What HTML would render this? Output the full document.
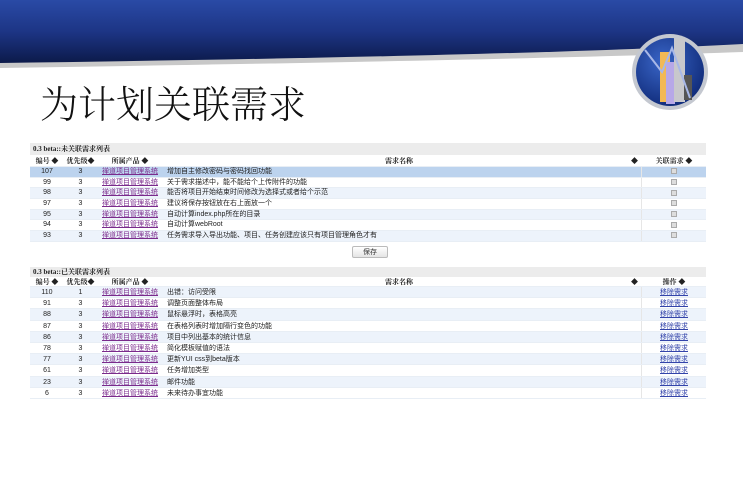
<!DOCTYPE html>
<html><head><meta charset="utf-8"><style>
*{margin:0;padding:0;box-sizing:border-box}
body{width:743px;height:483px;overflow:hidden;background:#fff;position:relative;font-family:"Liberation Sans","Noto Sans CJK SC",sans-serif}
.title{position:absolute;left:40px;top:74px;font-family:"Liberation Serif","Noto Serif CJK SC",serif;font-size:38px;color:#111;font-weight:300}
.tbl{position:absolute;left:30px;width:676px;font-size:7px;color:#222}
.cap{height:12px;background:#ececec;font-family:"Liberation Serif","Noto Serif CJK SC",serif;font-weight:bold;font-size:7px;line-height:12px;padding-left:3px}
.row{display:flex;height:10.7px;line-height:10.7px;border-bottom:1px solid #e8eef5}
.row.h{font-weight:bold;font-family:"Liberation Serif","Noto Serif CJK SC",serif;background:#fff;height:12px;line-height:12px}
.row div{white-space:nowrap;overflow:hidden}
.c1{width:34px;text-align:center}.c2{width:33px;text-align:center}.c3{width:66px;text-align:center}
.c4{flex:1;padding-left:4px;border-right:1px solid #e6e6e6}.c5{width:64px;text-align:center}
.odd{background:#edf3fb}.ev{background:#fff}.sel{background:#bcd3ee}
a{color:#7a2a8c;text-decoration:underline}
.op a{color:#3344aa}
.cb{display:inline-block;width:6px;height:6px;border:1px solid #aaa;background:#ddd;vertical-align:middle}
.btn{position:absolute;left:352px;top:246px;width:36px;height:12px;border:1px solid #bbb;border-radius:2px;background:linear-gradient(#fff,#e4e4e4);font-size:7px;text-align:center;line-height:11px;color:#333}
#t2 .row{height:11.2px;line-height:11.2px}
#t2 .row.h{height:10px;line-height:10px}
#t2 .cap{height:10px;line-height:10px}
</style></head><body>
<svg width="743" height="130" style="position:absolute;left:0;top:0">
<defs><linearGradient id="bg" x1="0" y1="0" x2="0" y2="1"><stop offset="0" stop-color="#2a4aa6"/><stop offset="0.5" stop-color="#1d3585"/><stop offset="1" stop-color="#0c1a4a"/></linearGradient>
<radialGradient id="cg" cx="0.4" cy="0.35" r="0.7"><stop offset="0" stop-color="#3a66c8"/><stop offset="1" stop-color="#0f2a78"/></radialGradient></defs>
<path d="M0 0H743V52Q520 60 0 68Z" fill="#c8c8c8"/>
<path d="M0 0H743V44Q520 56 0 63Z" fill="url(#bg)"/>
<circle cx="670" cy="72" r="38" fill="#c4c8d0"/>
<circle cx="670" cy="72" r="34" fill="url(#cg)"/>
<rect x="660" y="52" width="10" height="50" fill="#f2b955"/>
<rect x="666" y="62" width="9" height="42" fill="#b7a8e8"/>
<rect x="674" y="38" width="11" height="64" fill="#c8c8cc"/>
<rect x="684" y="75" width="8" height="25" fill="#555"/>
<path d="M645 50L662 72L672 48L690 98" stroke="#a8b8e8" stroke-width="2" fill="none"/>
</svg>
<div class="title">为计划关联需求</div>

<div class="tbl" style="top:143px">
<div class="cap">0.3 beta::未关联需求列表</div>
<div class="row h"><div class="c1">编号 ◆</div><div class="c2">优先级◆</div><div class="c3">所属产品 ◆</div><div class="c4" style="text-align:center;border:0">需求名称<span style="float:right;margin-right:4px">◆</span></div><div class="c5">关联需求 ◆</div></div>
<div class="row sel"><div class="c1">107</div><div class="c2">3</div><div class="c3"><a>禅道项目管理系统</a></div><div class="c4">增加自主修改密码与密码找回功能</div><div class="c5"><span class="cb"></span></div></div>
<div class="row ev"><div class="c1">99</div><div class="c2">3</div><div class="c3"><a>禅道项目管理系统</a></div><div class="c4">关于需求描述中，能不能给个上传附件的功能</div><div class="c5"><span class="cb"></span></div></div>
<div class="row odd"><div class="c1">98</div><div class="c2">3</div><div class="c3"><a>禅道项目管理系统</a></div><div class="c4">能否将项目开始结束时间修改为选择式或者给个示范</div><div class="c5"><span class="cb"></span></div></div>
<div class="row ev"><div class="c1">97</div><div class="c2">3</div><div class="c3"><a>禅道项目管理系统</a></div><div class="c4">建议将保存按钮放在右上面放一个</div><div class="c5"><span class="cb"></span></div></div>
<div class="row odd"><div class="c1">95</div><div class="c2">3</div><div class="c3"><a>禅道项目管理系统</a></div><div class="c4">自动计算index.php所在的目录</div><div class="c5"><span class="cb"></span></div></div>
<div class="row ev"><div class="c1">94</div><div class="c2">3</div><div class="c3"><a>禅道项目管理系统</a></div><div class="c4">自动计算webRoot</div><div class="c5"><span class="cb"></span></div></div>
<div class="row odd"><div class="c1">93</div><div class="c2">3</div><div class="c3"><a>禅道项目管理系统</a></div><div class="c4">任务需求导入导出功能、项目、任务创建应该只有项目管理角色才有</div><div class="c5"><span class="cb"></span></div></div>
</div>
<div class="btn">保存</div>

<div class="tbl" id="t2" style="top:267px">
<div class="cap">0.3 beta::已关联需求列表</div>
<div class="row h"><div class="c1">编号 ◆</div><div class="c2">优先级◆</div><div class="c3">所属产品 ◆</div><div class="c4" style="text-align:center;border:0">需求名称<span style="float:right;margin-right:4px">◆</span></div><div class="c5">操作 ◆</div></div>
<div class="row odd"><div class="c1">110</div><div class="c2">1</div><div class="c3"><a>禅道项目管理系统</a></div><div class="c4">出错：访问受限</div><div class="c5 op"><a>移除需求</a></div></div>
<div class="row ev"><div class="c1">91</div><div class="c2">3</div><div class="c3"><a>禅道项目管理系统</a></div><div class="c4">调整页面整体布局</div><div class="c5 op"><a>移除需求</a></div></div>
<div class="row odd"><div class="c1">88</div><div class="c2">3</div><div class="c3"><a>禅道项目管理系统</a></div><div class="c4">鼠标悬浮时，表格高亮</div><div class="c5 op"><a>移除需求</a></div></div>
<div class="row ev"><div class="c1">87</div><div class="c2">3</div><div class="c3"><a>禅道项目管理系统</a></div><div class="c4">在表格列表时增加隔行变色的功能</div><div class="c5 op"><a>移除需求</a></div></div>
<div class="row odd"><div class="c1">86</div><div class="c2">3</div><div class="c3"><a>禅道项目管理系统</a></div><div class="c4">项目中列出基本的统计信息</div><div class="c5 op"><a>移除需求</a></div></div>
<div class="row ev"><div class="c1">78</div><div class="c2">3</div><div class="c3"><a>禅道项目管理系统</a></div><div class="c4">简化模板赋值的语法</div><div class="c5 op"><a>移除需求</a></div></div>
<div class="row odd"><div class="c1">77</div><div class="c2">3</div><div class="c3"><a>禅道项目管理系统</a></div><div class="c4">更新YUI css到beta版本</div><div class="c5 op"><a>移除需求</a></div></div>
<div class="row ev"><div class="c1">61</div><div class="c2">3</div><div class="c3"><a>禅道项目管理系统</a></div><div class="c4">任务增加类型</div><div class="c5 op"><a>移除需求</a></div></div>
<div class="row odd"><div class="c1">23</div><div class="c2">3</div><div class="c3"><a>禅道项目管理系统</a></div><div class="c4">邮件功能</div><div class="c5 op"><a>移除需求</a></div></div>
<div class="row ev"><div class="c1">6</div><div class="c2">3</div><div class="c3"><a>禅道项目管理系统</a></div><div class="c4">未来待办事宜功能</div><div class="c5 op"><a>移除需求</a></div></div>
</div>
</body></html>
